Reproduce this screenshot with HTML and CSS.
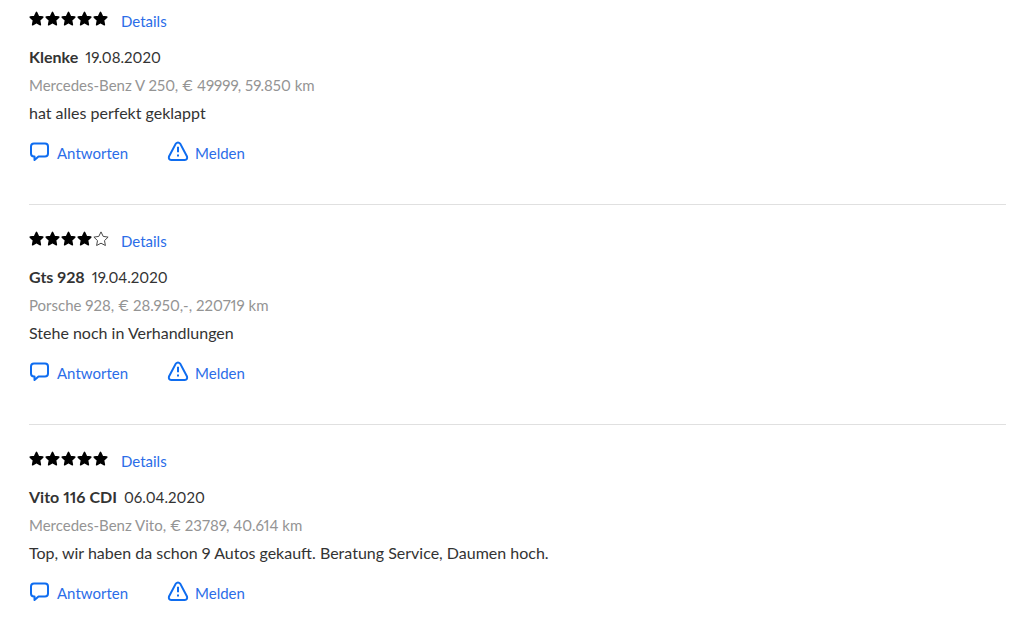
FILE: index.html
```
<!DOCTYPE html>
<html lang="de">
<head>
  <meta charset="UTF-8">
  <meta name="viewport" content="width=device-width, initial-scale=1.0">
  <title>Bewertungen</title>
  <link rel="stylesheet" href="styles.css">
</head>
<body>
  <svg class="sprite" aria-hidden="true">
    <symbol id="star" viewBox="0 0 16 16">
      <path d="M7.500 1.400l1.900 4 4.400.7-3.200 3.200.8 4.500-3.900-2.100-3.900 2.100.8-4.500-3.200-3.200 4.400-.7z" stroke-width="1.500" stroke-linejoin="round"/>
    </symbol>
    <symbol id="star-empty" viewBox="0 0 16 16">
      <path d="M8 .9l2.200 4.500 4.900.7-3.600 3.500.9 4.900L8 12.200l-4.400 2.300.9-4.900L.9 6.100l4.900-.7z" stroke-width=".9" stroke-linejoin="round"/>
    </symbol>
    <symbol id="bubble" viewBox="0 0 22 22">
      <path d="M5 2.500h11q3 0 3 3v7q0 3-3 3H9.500L5.500 19v-3.500H5q-3 0-3-3v-7q0-3 3-3z" stroke-linejoin="round"/>
    </symbol>
    <symbol id="warning" viewBox="0 0 22 22">
      <path d="M8.800 2.600Q11 .2 13.200 2.600L20 15.500Q20.800 18.800 17.800 19H4.200Q1.200 18.800 2 15.500z" stroke-linejoin="round"/>
      <path d="M11 5.800v5.500M11 13.500v2"/>
    </symbol>
  </svg>

  <main class="reviews">
    <article class="review">
      <div class="rating">
        <div class="stars" role="img" aria-label="5 von 5 Sternen">
          <svg class="star"><use href="#star"/></svg>
          <svg class="star"><use href="#star"/></svg>
          <svg class="star"><use href="#star"/></svg>
          <svg class="star"><use href="#star"/></svg>
          <svg class="star"><use href="#star"/></svg>
        </div>
        <a class="details" href="#">Details</a>
      </div>
      <p class="author"><strong>Klenke</strong><span class="date">19.08.2020</span></p>
      <p class="vehicle">Mercedes-Benz V 250, € 49999, 59.850 km</p>
      <p class="comment">hat alles perfekt geklappt</p>
      <div class="actions">
        <button class="action" type="button"><svg class="icon"><use href="#bubble"/></svg>Antworten</button>
        <button class="action" type="button"><svg class="icon"><use href="#warning"/></svg>Melden</button>
      </div>
    </article>

    <article class="review">
      <div class="rating">
        <div class="stars" role="img" aria-label="4 von 5 Sternen">
          <svg class="star"><use href="#star"/></svg>
          <svg class="star"><use href="#star"/></svg>
          <svg class="star"><use href="#star"/></svg>
          <svg class="star"><use href="#star"/></svg>
          <svg class="star empty"><use href="#star-empty"/></svg>
        </div>
        <a class="details" href="#">Details</a>
      </div>
      <p class="author"><strong>Gts 928</strong><span class="date">19.04.2020</span></p>
      <p class="vehicle">Porsche 928, € 28.950,-, 220719 km</p>
      <p class="comment">Stehe noch in Verhandlungen</p>
      <div class="actions">
        <button class="action" type="button"><svg class="icon"><use href="#bubble"/></svg>Antworten</button>
        <button class="action" type="button"><svg class="icon"><use href="#warning"/></svg>Melden</button>
      </div>
    </article>

    <article class="review">
      <div class="rating">
        <div class="stars" role="img" aria-label="5 von 5 Sternen">
          <svg class="star"><use href="#star"/></svg>
          <svg class="star"><use href="#star"/></svg>
          <svg class="star"><use href="#star"/></svg>
          <svg class="star"><use href="#star"/></svg>
          <svg class="star"><use href="#star"/></svg>
        </div>
        <a class="details" href="#">Details</a>
      </div>
      <p class="author"><strong>Vito 116 CDI</strong><span class="date">06.04.2020</span></p>
      <p class="vehicle">Mercedes-Benz Vito, € 23789, 40.614 km</p>
      <p class="comment">Top, wir haben da schon 9 Autos gekauft. Beratung Service, Daumen hoch.</p>
      <div class="actions">
        <button class="action" type="button"><svg class="icon"><use href="#bubble"/></svg>Antworten</button>
        <button class="action" type="button"><svg class="icon"><use href="#warning"/></svg>Melden</button>
      </div>
    </article>
  </main>
</body>
</html>
```
FILE: styles.css
```
body { margin: 0; background: #fff; color: #333; font: 16px/28px Lato, sans-serif; font-variant-numeric: proportional-nums; }
p { margin: 0; }
.sprite { display: none; }
.reviews { padding: 7px 22px 0 29px; }
.review + .review { margin-top: 37px; padding-top: 22px; border-top: 1px solid #e0e0e0; }
.rating { display: flex; gap: 12px; margin-bottom: 8px; }
.stars { display: flex; padding-top: 4px; }
.star { width: 16px; height: 16px; fill: #000; stroke: #000; }
.star.empty { fill: none; stroke: #333; }
.details, .date, .vehicle, .action { font-size: 15px; }
.details { color: #2b6de8; text-decoration: none; }
.author { display: flex; align-items: baseline; gap: 7px; }
.author strong { font-weight: 700; }
.vehicle { color: #949494; }
.actions { display: flex; gap: 39px; margin-top: 12px; }
.action { display: flex; gap: 6px; padding: 0; border: none; background: none; color: #2b6de8; font-family: inherit; line-height: inherit; cursor: pointer; }
.icon { width: 22px; height: 22px; margin-top: 2px; fill: none; stroke: #0f6df0; stroke-width: 2px; }
```
